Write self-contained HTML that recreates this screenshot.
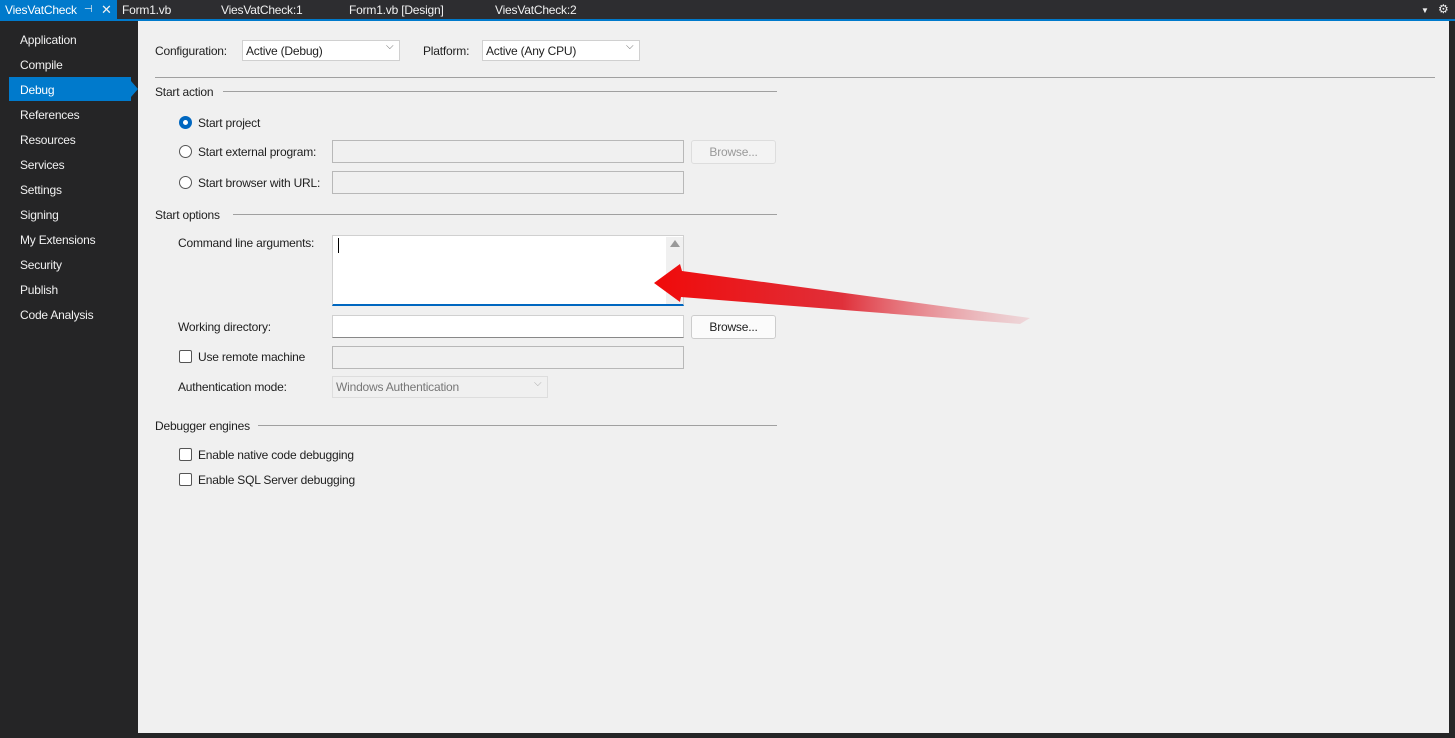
<!DOCTYPE html>
<html><head><style>
*{margin:0;padding:0;box-sizing:border-box}
body{width:1455px;height:738px;background:#252526;font-family:"Segoe UI","Liberation Sans",sans-serif;font-size:12px;letter-spacing:-0.2px;position:relative;overflow:hidden;color:#1e1e1e}
.a{position:absolute;white-space:nowrap}
.tabbar{left:0;top:0;width:1455px;height:20px;background:#2d2d30}
.tab{color:#f1f1f1;top:3px;font-size:12px}
.blue{left:0;top:19px;width:1455px;height:2px;background:#007acc}
.side{color:#f1f1f1;left:20px;font-size:12px}
.content{left:138px;top:21px;width:1311px;height:712px;background:#f0f0f0}
.in{position:absolute;background:#f0f0f0;border:1px solid #c8c8c8}
.wh{position:absolute;background:#fff;border:1px solid #d0d0d0;border-bottom:1px solid #888}
.btn{position:absolute;background:#fbfbfb;border:1px solid #ccc;border-radius:3px;text-align:center;line-height:22px}
.line{position:absolute;height:1px;background:#a0a0a0}
.rad{position:absolute;width:13px;height:13px;border:1px solid #555;border-radius:50%;background:#fff}
.chk{position:absolute;width:13px;height:13px;border:1px solid #555;border-radius:2px;background:#fff}
</style></head><body>
<div class="a tabbar"></div>
<div class="a" style="left:0;top:0;width:117px;height:21px;background:#007acc"></div>
<div class="a tab" style="left:5px;color:#fff">ViesVatCheck</div>
<div class="a tab" style="left:84px;font-size:10px;top:4px">⊣</div>
<div class="a tab" style="left:101px;top:2px;font-size:13px">✕</div>
<div class="a tab" style="left:122px">Form1.vb</div>
<div class="a tab" style="left:221px">ViesVatCheck:1</div>
<div class="a tab" style="left:349px">Form1.vb [Design]</div>
<div class="a tab" style="left:495px">ViesVatCheck:2</div>
<div class="a tab" style="left:1421px;font-size:8px;top:6px">▼</div>
<div class="a tab" style="left:1438px;font-size:12px;top:2px">⚙</div>
<div class="a blue"></div>

<div class="a" style="left:9px;top:77px;width:122px;height:24px;background:#007acc"></div>
<div class="a" style="left:131px;top:81px;width:0;height:0;border-top:8px solid transparent;border-bottom:8px solid transparent;border-left:7px solid #007acc"></div>
<div class="a side" style="top:33px">Application</div>
<div class="a side" style="top:58px">Compile</div>
<div class="a side" style="top:83px;color:#fff">Debug</div>
<div class="a side" style="top:108px">References</div>
<div class="a side" style="top:133px">Resources</div>
<div class="a side" style="top:158px">Services</div>
<div class="a side" style="top:183px">Settings</div>
<div class="a side" style="top:208px">Signing</div>
<div class="a side" style="top:233px">My Extensions</div>
<div class="a side" style="top:258px">Security</div>
<div class="a side" style="top:283px">Publish</div>
<div class="a side" style="top:308px">Code Analysis</div>

<div class="a content"></div>
<div class="a" style="left:155px;top:44px">Configuration:</div>
<div class="wh" style="left:242px;top:40px;width:158px;height:21px;border-bottom-color:#d0d0d0"></div>
<div class="a" style="left:246px;top:44px">Active (Debug)</div>
<div class="a" style="left:386px;top:41px;color:#666;font-size:10px">⌵</div>
<div class="a" style="left:423px;top:44px">Platform:</div>
<div class="wh" style="left:482px;top:40px;width:158px;height:21px;border-bottom-color:#d0d0d0"></div>
<div class="a" style="left:486px;top:44px">Active (Any CPU)</div>
<div class="a" style="left:626px;top:41px;color:#666;font-size:10px">⌵</div>
<div class="line" style="left:155px;top:77px;width:1280px"></div>

<div class="a" style="left:155px;top:85px">Start action</div>
<div class="line" style="left:223px;top:91px;width:554px"></div>
<div class="rad" style="left:179px;top:116px;border:4px solid #0067c0"></div>
<div class="a" style="left:198px;top:116px">Start project</div>
<div class="rad" style="left:179px;top:145px"></div>
<div class="a" style="left:198px;top:145px">Start external program:</div>
<div class="in" style="left:332px;top:140px;width:352px;height:23px;border-color:#b8b8b8"></div>
<div class="btn" style="left:691px;top:140px;width:85px;height:24px;color:#999;background:#f3f3f3;border-color:#ddd">Browse...</div>
<div class="rad" style="left:179px;top:176px"></div>
<div class="a" style="left:198px;top:176px">Start browser with URL:</div>
<div class="in" style="left:332px;top:171px;width:352px;height:23px;border-color:#b8b8b8"></div>

<div class="a" style="left:155px;top:208px">Start options</div>
<div class="line" style="left:233px;top:214px;width:544px"></div>
<div class="a" style="left:178px;top:236px">Command line arguments:</div>
<div class="wh" style="left:332px;top:235px;width:352px;height:71px;border-bottom:2px solid #0067c0"></div>
<div class="a" style="left:666px;top:237px;width:17px;height:67px;background:#f0f0f0"></div>
<div class="a" style="left:670px;top:240px;width:0;height:0;border-left:5px solid transparent;border-right:5px solid transparent;border-bottom:7px solid #999"></div>
<div class="a" style="left:338px;top:238px;width:1px;height:15px;background:#000"></div>
<div class="a" style="left:178px;top:320px">Working directory:</div>
<div class="wh" style="left:332px;top:315px;width:352px;height:23px"></div>
<div class="btn" style="left:691px;top:315px;width:85px;height:24px">Browse...</div>
<div class="chk" style="left:179px;top:350px"></div>
<div class="a" style="left:198px;top:350px">Use remote machine</div>
<div class="in" style="left:332px;top:346px;width:352px;height:23px;border-color:#b8b8b8"></div>
<div class="a" style="left:178px;top:380px">Authentication mode:</div>
<div class="in" style="left:332px;top:376px;width:216px;height:22px;border-color:#ddd"></div>
<div class="a" style="left:336px;top:380px;color:#777">Windows Authentication</div>
<div class="a" style="left:534px;top:378px;color:#aaa;font-size:10px">⌵</div>

<div class="a" style="left:155px;top:419px">Debugger engines</div>
<div class="line" style="left:258px;top:425px;width:519px"></div>
<div class="chk" style="left:179px;top:448px"></div>
<div class="a" style="left:198px;top:448px">Enable native code debugging</div>
<div class="chk" style="left:179px;top:473px"></div>
<div class="a" style="left:198px;top:473px">Enable SQL Server debugging</div>

<svg class="a" style="left:0;top:0" width="1455" height="738">
<defs><linearGradient id="g" x1="654" y1="0" x2="1030" y2="0" gradientUnits="userSpaceOnUse">
<stop offset="0" stop-color="#f00a0a"/><stop offset="0.5" stop-color="#e0303a"/><stop offset="1" stop-color="#e8a0a8" stop-opacity="0.3"/></linearGradient></defs>
<polygon points="654,283 680,264 682,271 1030,318 1020,324 681,297 680,302" fill="url(#g)"/>
</svg>
</body></html>
